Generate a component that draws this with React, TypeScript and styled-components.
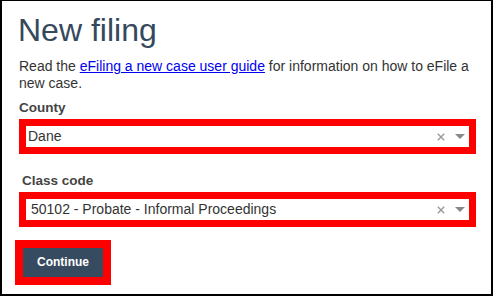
import React from "react";
import styled, { createGlobalStyle } from "styled-components";

const GlobalStyle = createGlobalStyle`
  html, body {
    margin: 0;
    padding: 0;
    background: #ffffff;
  }
  body {
    font-family: "Liberation Sans", Arial, sans-serif;
  }
`;

const Frame = styled.div`
  box-sizing: border-box;
  width: 493px;
  height: 296px;
  border: 2px solid #000;
  border-top-width: 1px;
  padding: 12px 15px 0 17px;
  background: #fff;
`;

const Title = styled.h1`
  margin: 0 0 0 -1px;
  font-size: 32px;
  font-weight: 400;
  line-height: 34px;
  color: #35495d;
`;

const Intro = styled.p`
  margin: 11px 0 0 0;
  font-size: 14px;
  line-height: 17px;
  color: #333;
`;

const Link = styled.a`
  color: #0000ee;
  text-decoration: underline;
`;

const Field = styled.div<{ $gap: number }>`
  margin-top: ${(p) => p.$gap}px;
`;

const Label = styled.label<{ $indent: number }>`
  display: block;
  padding-left: ${(p) => p.$indent}px;
  font-size: 13.5px;
  font-weight: 700;
  line-height: 16px;
  color: #444;
`;

const Highlight = styled.div<{ $indent: number }>`
  margin-top: 3px;
  border: 7px solid #ff0000;
  height: 21px;
  display: flex;
  align-items: center;
  padding: 0 4px 0 ${(p) => 2 + p.$indent}px;
  background: #fff;
`;

const Value = styled.span`
  flex: 1;
  font-size: 14px;
  line-height: 21px;
  color: #333;
  white-space: nowrap;
`;

const Clear = styled.svg`
  display: block;
  margin-right: 10px;
`;

const Arrow = styled.span`
  display: block;
  width: 0;
  height: 0;
  border-style: solid;
  border-width: 5px 5px 0 5px;
  border-color: #888 transparent transparent transparent;
`;

const ButtonHighlight = styled.div`
  margin: 13px 0 0 -4px;
  border: 8px solid #ff0000;
  width: fit-content;
`;

const Button = styled.button`
  display: block;
  width: 80px;
  height: 29px;
  margin: 0;
  padding: 0 0 2px 0;
  border: none;
  background: #374b60;
  color: #fff;
  font-family: "Liberation Sans", Arial, sans-serif;
  font-size: 12px;
  font-weight: 700;
  cursor: pointer;
`;

const ClearIcon = () => (
  <Clear width="8" height="8" viewBox="0 0 8 8">
    <path d="M0.8 0.8 L7.2 7.2 M7.2 0.8 L0.8 7.2" stroke="#9a9a9a" strokeWidth="1.4" />
  </Clear>
);

type SelectProps = { label: string; value: string; indent: number; gap: number };

const SelectField = ({ label, value, indent, gap }: SelectProps) => (
  <Field $gap={gap}>
    <Label $indent={indent}>{label}</Label>
    <Highlight $indent={indent}>
      <Value>{value}</Value>
      <ClearIcon />
      <Arrow />
    </Highlight>
  </Field>
);

export default function App() {
  return (
    <>
      <GlobalStyle />
      <Frame>
        <Title>New filing</Title>
        <Intro>
          Read the <Link href="#">eFiling a new case user guide</Link> for information on how to eFile a new case.
        </Intro>
        <SelectField label="County" value="Dane" indent={0} gap={8} />
        <SelectField
          label="Class code"
          value="50102 - Probate - Informal Proceedings"
          indent={3}
          gap={19}
        />
        <ButtonHighlight>
          <Button>Continue</Button>
        </ButtonHighlight>
      </Frame>
    </>
  );
}
